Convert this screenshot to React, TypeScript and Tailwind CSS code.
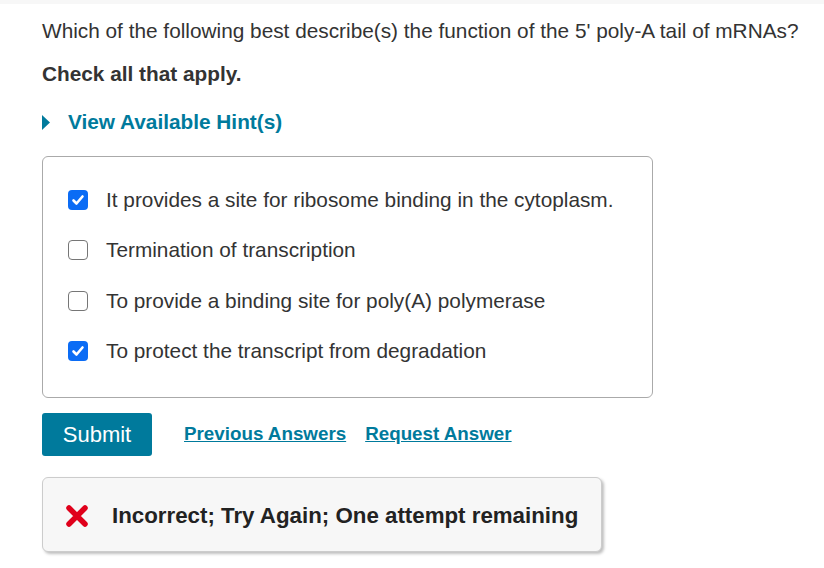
const options = [
  { label: "It provides a site for ribosome binding in the cytoplasm.", checked: true },
  { label: "Termination of transcription", checked: false },
  { label: "To provide a binding site for poly(A) polymerase", checked: false },
  { label: "To protect the transcript from degradation", checked: true },
];

const Box = ({ checked }: { checked: boolean }) =>
  checked ? (
    <span className="w-[20px] h-[20px] rounded-[4px] bg-[#0b6cf5] flex items-center justify-center shrink-0">
      <svg width="14" height="14" viewBox="0 0 14 14">
        <path d="M2.5 7.5 L5.5 10.5 L11.5 3.5" fill="none" stroke="white" strokeWidth="2.6" strokeLinecap="round" strokeLinejoin="round" />
      </svg>
    </span>
  ) : (
    <span className="w-[20px] h-[20px] rounded-[4px] border-[1.5px] border-[#767676] bg-white shrink-0" />
  );

export default function App() {
  return (
    <div className="w-[824px] h-[568px] bg-white font-['Liberation_Sans',Arial,sans-serif] text-[#333]">
      <div className="h-[4px] bg-[#f7f7f7]" />
      <div className="pl-[42px] pt-[15px]">
        <p className="text-[20.8px] leading-[24px]">
          Which of the following best describe(s) the function of the 5' poly-A tail of mRNAs?
        </p>
        <p className="mt-[19px] text-[20.8px] leading-[24px] font-bold">Check all that apply.</p>

        <div className="mt-[24px] flex items-center gap-[18px] text-[#007a9c]">
          <svg width="8" height="15" viewBox="0 0 8 15">
            <path d="M0 0 L8 7.5 L0 15 Z" fill="#007a9c" />
          </svg>
          <span className="text-[20.8px] leading-[24px] font-bold">View Available Hint(s)</span>
        </div>

        {/* Answer choices */}
        <div className="mt-[22px] w-[611px] h-[242px] border border-[#aaa] rounded-[6px] pl-[25px] pt-[33px] flex flex-col gap-[30.3px]">
          {options.map((o, i) => (
            <label key={i} className="flex items-center gap-[18px] h-[20px]">
              <Box checked={o.checked} />
              <span className="text-[20.8px] leading-[24px] text-[#333]">{o.label}</span>
            </label>
          ))}
        </div>

        {/* Actions */}
        <div className="mt-[15px] flex items-center">
          <button className="w-[110px] h-[43px] rounded-[3px] bg-[#007a9c] text-white text-[22px]">Submit</button>
          <a className="ml-[32px] text-[18.8px] font-bold text-[#007a9c] underline">Previous Answers</a>
          <a className="ml-[19px] text-[18.8px] font-bold text-[#007a9c] underline">Request Answer</a>
        </div>

        {/* Feedback */}
        <div className="mt-[21px] w-[560px] h-[75px] bg-[#f7f7f7] border border-[#ccc] rounded-[6px] shadow-[2px_2px_3px_rgba(0,0,0,0.25)] flex items-center pl-[22px] pt-[2px] gap-[23px]">
          <svg width="24" height="24" viewBox="0 0 24 24">
            <path d="M4 4 L20 20 M20 4 L4 20" stroke="#e0001b" strokeWidth="5.5" strokeLinecap="round" />
          </svg>
          <span className="text-[22.3px] font-bold text-[#222]">Incorrect; Try Again; One attempt remaining</span>
        </div>
      </div>
    </div>
  );
}
